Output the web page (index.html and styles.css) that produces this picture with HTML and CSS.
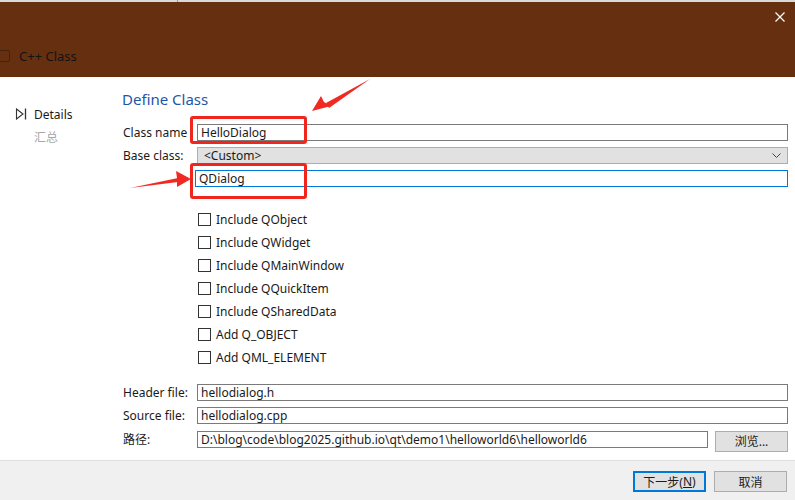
FILE: index.html
```html
<!DOCTYPE html>
<html>
<head>
<meta charset="utf-8">
<link rel="stylesheet" href="styles.css">
</head>
<body>
<div class="window">
  <div class="topstrip"><span class="strip-line"></span></div>
  <div class="header">
    <div class="title-row">
      <span class="title-icon"></span>
      <span class="title">C++ Class</span>
    </div>
    <svg class="close" width="10" height="10" viewBox="0 0 10 10"><path d="M0.5 0.5 L9.5 9.5 M9.5 0.5 L0.5 9.5" stroke="#ffffff" stroke-width="1.2" fill="none"/></svg>
  </div>
  <div class="body">
    <div class="nav">
      <div class="nav-item">
        <svg class="nav-icon" width="12" height="12" viewBox="0 0 12 12"><path d="M1.5 1 L8 6 L1.5 11 Z" fill="none" stroke="#333" stroke-width="1.1"/><path d="M10.5 0.5 V11.5" stroke="#333" stroke-width="1.3"/></svg>
        <span>Details</span>
      </div>
      <div class="nav-sub">汇总</div>
    </div>
    <div class="main">
      <div class="heading">Define Class</div>
      <div class="form">
        <label>Class name</label>
        <div class="input">HelloDialog</div>
        <label>Base class:</label>
        <div class="combo"><span>&lt;Custom&gt;</span>
          <svg width="9" height="6" viewBox="0 0 9 6"><path d="M0.5 0.5 L4.5 4.5 L8.5 0.5" stroke="#444" stroke-width="1" fill="none"/></svg>
        </div>
        <span></span>
        <div class="input focus">QDialog</div>
      </div>
      <div class="checks">
        <div class="check"><span class="box"></span>Include QObject</div>
        <div class="check"><span class="box"></span>Include QWidget</div>
        <div class="check"><span class="box"></span>Include QMainWindow</div>
        <div class="check"><span class="box"></span>Include QQuickItem</div>
        <div class="check"><span class="box"></span>Include QSharedData</div>
        <div class="check"><span class="box"></span>Add Q_OBJECT</div>
        <div class="check"><span class="box"></span>Add QML_ELEMENT</div>
      </div>
      <div class="form files">
        <label>Header file:</label>
        <div class="input">hellodialog.h</div>
        <label>Source file:</label>
        <div class="input">hellodialog.cpp</div>
        <label>路径:</label>
        <div class="path-row">
          <div class="input path">D:\blog\code\blog2025.github.io\qt\demo1\helloworld6\helloworld6</div>
          <div class="btn">浏览...</div>
        </div>
      </div>
    </div>
  </div>
  <div class="footer">
    <div class="btn primary">下一步(<u>N</u>)</div>
    <div class="btn">取消</div>
  </div>

  <div class="mark mark1"></div>
  <div class="mark mark2"></div>
  <svg class="arrows" width="795" height="500" viewBox="0 0 795 500">
    <path d="M370 79 L326 103 L329 108 Z" fill="#f02a22"/>
    <polygon points="312,111 321,96 324,102 331,106" fill="#f02a22"/>
    <path d="M130 188 L178 182 L178 178 Z" fill="#f02a22"/>
    <polygon points="191,179 176,171 177,178 177,187" fill="#f02a22"/>
  </svg>
</div>
</body>
</html>
```
FILE: styles.css
```css
* { box-sizing: border-box; }
html, body { margin: 0; padding: 0; }
body {
  width: 795px;
  height: 500px;
  overflow: hidden;
  background: #ffffff;
  font-family: "Noto Sans", "Noto Sans CJK SC", sans-serif;
  font-size: 12px;
  color: #1a1a1a;
}
.window {
  position: relative;
  width: 795px;
  height: 500px;
  display: flex;
  flex-direction: column;
}
.topstrip {
  height: 2px;
  background: #d9d9d9;
  position: relative;
}
.strip-line {
  position: absolute;
  left: 177px;
  top: 0;
  width: 1px;
  height: 2px;
  background: #9a9a9a;
}
.header {
  height: 75px;
  background: #663010;
  position: relative;
  display: flex;
  align-items: flex-end;
}
.title-row {
  display: flex;
  align-items: center;
  height: 20px;
  margin-bottom: 11px;
}
.title-icon {
  width: 12px;
  height: 12px;
  margin-left: -2px;
  border: 1px solid #2d1a0e;
  border-radius: 2px;
  opacity: 0.6;
}
.title {
  margin-left: 9px;
  font-size: 13px;
  color: #141414;
}
.close {
  position: absolute;
  right: 10px;
  top: 10px;
}
.body {
  flex: 1;
  display: flex;
}
.nav {
  width: 122px;
  padding-top: 29px;
  padding-left: 15px;
}
.nav-item {
  display: flex;
  align-items: center;
  height: 16px;
  gap: 7px;
}
.nav-sub {
  margin-left: 19px;
  margin-top: 6px;
  color: #a8a8a8;
}
.main {
  flex: 1;
  padding-right: 7px;
  padding-top: 12px;
}
.heading {
  font-size: 15px;
  line-height: 20px;
  color: #1f55a8;
  margin-bottom: 15px;
}
.form {
  display: grid;
  grid-template-columns: 75px 1fr;
  grid-auto-rows: 17px;
  row-gap: 6px;
  align-items: center;
}
.form label {
  padding-left: 1px;
  white-space: nowrap;
}
.input {
  height: 17px;
  border: 1px solid #7a7a7a;
  background: #fff;
  padding: 0 3px;
  line-height: 15px;
  white-space: nowrap;
  overflow: hidden;
}
.input.focus {
  border-color: #0078d7;
  margin-left: -2px;
}
.combo {
  height: 17px;
  border: 1px solid #adadad;
  background: #e1e1e1;
  padding: 0 6px;
  line-height: 15px;
  display: flex;
  justify-content: space-between;
  align-items: center;
}
.checks {
  margin-top: 21px;
  margin-left: 76px;
  display: flex;
  flex-direction: column;
}
.check {
  height: 23px;
  display: flex;
  align-items: center;
}
.box {
  width: 13px;
  height: 13px;
  border: 1px solid #333;
  margin-right: 5px;
  background: #fff;
}
.files {
  margin-top: 15px;
  row-gap: 6px;
}
.path-row {
  display: flex;
  gap: 7px;
  align-items: flex-start;
  height: 17px;
  margin-top: 1px;
}
.path {
  flex: 1;
}
.btn {
  width: 73px;
  height: 21px;
  border: 1px solid #adadad;
  background: #e1e1e1;
  display: flex;
  align-items: center;
  justify-content: center;
  flex-shrink: 0;
}
.footer {
  height: 40px;
  background: #f0f0f0;
  border-top: 1px solid #dfdfdf;
  display: flex;
  justify-content: flex-end;
  padding-top: 10px;
  padding-right: 8px;
  gap: 8px;
}
.btn.primary {
  border: 2px solid #0078d7;
}
.btn u { text-decoration: underline; }
.mark {
  position: absolute;
  border: 3px solid #f0261e;
  border-radius: 3px;
}
.mark1 { left: 190px; top: 116px; width: 117px; height: 28px; }
.mark2 { left: 190px; top: 163px; width: 117px; height: 36px; }
.arrows {
  position: absolute;
  left: 0;
  top: 0;
  pointer-events: none;
}
```
